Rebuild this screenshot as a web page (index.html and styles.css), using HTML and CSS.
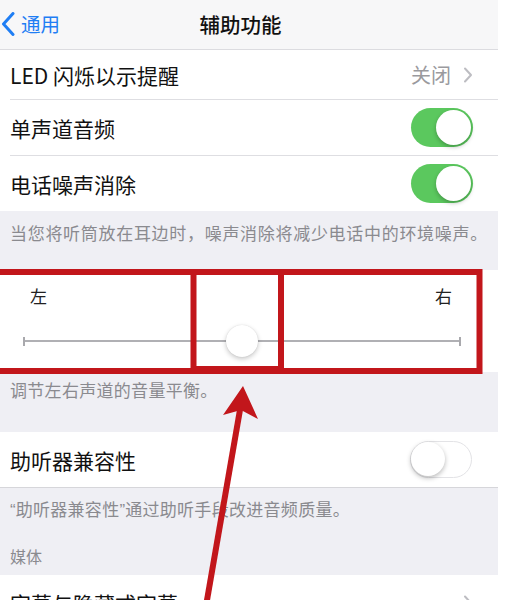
FILE: index.html
```html
<!DOCTYPE html>
<html lang="zh">
<head>
<meta charset="utf-8">
<title>辅助功能</title>
<link rel="stylesheet" href="styles.css">
</head>
<body>
<div class="screen">
  <header class="nav">
    <div class="back">
      <svg class="back-icon" width="14" height="24" viewBox="0 0 14 24"><path d="M12 1.5 L2.5 12 L12 22.5" fill="none" stroke="#1f7ef4" stroke-width="3" stroke-linecap="round" stroke-linejoin="round"/></svg>
      <span>通用</span>
    </div>
    <div class="title">辅助功能</div>
    <div class="nav-spacer"></div>
  </header>

  <section class="group">
    <div class="row row-first">
      <span class="label">LED 闪烁以示提醒</span>
      <span class="detail">关闭<svg class="chev" width="10" height="16" viewBox="0 0 10 16"><path d="M2 1.5 L8 8 L2 14.5" fill="none" stroke="#bdbdc2" stroke-width="2" stroke-linecap="round" stroke-linejoin="round"/></svg></span>
    </div>
    <div class="row">
      <span class="label">单声道音频</span>
      <span class="toggle on"><span class="knob"></span></span>
    </div>
    <div class="row">
      <span class="label">电话噪声消除</span>
      <span class="toggle on"><span class="knob"></span></span>
    </div>
  </section>
  <p class="footer f1">当您将听筒放在耳边时，噪声消除将减少电话中的环境噪声。</p>

  <section class="slider-group">
    <div class="slider-labels"><span>左</span><span>右</span></div>
    <div class="slider">
      <span class="tick"></span>
      <span class="track"></span>
      <span class="thumb"></span>
      <span class="track"></span>
      <span class="tick"></span>
    </div>
  </section>
  <p class="footer f2">调节左右声道的音量平衡。</p>

  <section class="group bordered">
    <div class="row row-first">
      <span class="label">助听器兼容性</span>
      <span class="toggle off"><span class="knob"></span></span>
    </div>
  </section>
  <p class="footer f3"><span class="q">“</span>助听器兼容性<span class="q">”</span>通过助听手段改进音频质量。</p>
  <p class="section-head">媒体</p>

  <section class="group">
    <div class="row row-first">
      <span class="label">字幕与隐藏式字幕</span>
      <svg class="chev" width="10" height="16" viewBox="0 0 10 16"><path d="M2 1.5 L8 8 L2 14.5" fill="none" stroke="#bdbdc2" stroke-width="2" stroke-linecap="round" stroke-linejoin="round"/></svg>
    </div>
  </section>

  <svg class="annot" width="507" height="600" viewBox="0 0 507 600">
    <g fill="none" stroke="#c2161b" stroke-width="6">
      <rect x="-4" y="272" width="483.5" height="99"/>
      <rect x="193.5" y="272" width="87.5" height="97"/>
    </g>
    <line x1="206" y1="606" x2="241" y2="404" stroke="#c2161b" stroke-width="6"/>
    <polygon points="243,386 258,419 241,410 223,415" fill="#c2161b"/>
  </svg>
</div>
</body>
</html>
```

FILE: styles.css
```css
* { box-sizing: border-box; }
html, body { margin: 0; padding: 0; background: #fff; }
body {
  font-family: "Noto Sans CJK SC", "Noto Sans", sans-serif;
  color: #111;
  overflow: hidden;
}
.screen {
  position: relative;
  width: 498px;
  height: 600px;
  background: #efeff4;
  overflow: hidden;
}
.nav {
  height: 50px;
  background: #f7f7f8;
  border-bottom: 1px solid #dcdce0;
  display: flex;
  align-items: center;
  justify-content: space-between;
  padding: 0 0 1px 1px;
}
.back {
  width: 90px;
  display: flex;
  align-items: center;
  gap: 6px;
  color: #1f7ef4;
  font-size: 19.5px;
  line-height: 24px;
}
.back-icon { flex: none; }
.title {
  font-size: 20.5px;
  font-weight: 500;
  line-height: 26px;
  color: #111;
}
.nav-spacer { width: 108px; }

.group { background: #fff; }
.group.bordered { border-bottom: 1px solid #d6d6da; }
.row {
  margin-left: 10px;
  padding-right: 25px;
  height: 56px;
  border-top: 1px solid #dedee2;
  display: flex;
  align-items: center;
  justify-content: space-between;
}
.row-first { border-top: none; height: 55px; }
.group:first-of-type .row-first { height: 49px; }
.label { font-size: 21px; line-height: 28px; }
.detail {
  display: flex;
  align-items: center;
  gap: 12px;
  color: #9a9a9e;
  font-size: 20px;
  line-height: 28px;
}
.chev { flex: none; }
.toggle {
  position: relative;
  width: 62px;
  height: 39px;
  border-radius: 20px;
  flex: none;
}
.toggle.on { background: #5bc85e; }
.toggle.off { background: #fff; border: 1.5px solid #e3e3e6; height: 37px; margin-right: 1px; }
.knob {
  position: absolute;
  top: 2px;
  width: 35px;
  height: 35px;
  border-radius: 50%;
  background: #fff;
  box-shadow: 0 2px 4px rgba(0,0,0,0.25);
}
.toggle.on .knob { right: 2px; }
.toggle.off .knob { left: 0; top: 0; width: 34px; height: 34px; box-shadow: 0 2px 5px rgba(0,0,0,0.28); }

.footer {
  margin: 0;
  padding: 0 10px;
  font-size: 17px;
  line-height: 24px;
  color: #8a8a8f;
  letter-spacing: 0.3px;
}
.q { font-family: "Liberation Sans", sans-serif; letter-spacing: 0; }
.f1 { padding-top: 10px; padding-bottom: 25px; letter-spacing: 0.7px; }
.f2 { padding-top: 6px; padding-bottom: 30px; }
.f3 { padding-top: 9px; }
.section-head {
  margin: 0;
  padding: 22px 10px 8px;
  font-size: 16px;
  line-height: 22px;
  color: #8a8a8f;
}

.slider-group {
  background: #fff;
  height: 102px;
  padding-top: 14px;
}
.slider-labels {
  display: flex;
  justify-content: space-between;
  padding: 0 46px 0 30px;
  font-size: 17px;
  line-height: 24px;
  color: #222;
}
.slider {
  margin-top: 17px;
  height: 32px;
  padding: 0 37px 0 23px;
  display: flex;
  align-items: center;
}
.tick { width: 2px; height: 9px; background: #a9a9ad; flex: none; }
.track { height: 2px; background: #b0b0b4; flex: 1; }
.thumb {
  width: 32px;
  height: 32px;
  border-radius: 50%;
  background: #fff;
  box-shadow: 0 2px 5px rgba(0,0,0,0.22), 0 0 1px rgba(0,0,0,0.15);
  flex: none;
  margin: 0 -2px;
  position: relative;
}
.slider .track:first-of-type { flex: 0 0 201px; }

.annot {
  position: absolute;
  left: 0;
  top: 0;
  pointer-events: none;
}
```
